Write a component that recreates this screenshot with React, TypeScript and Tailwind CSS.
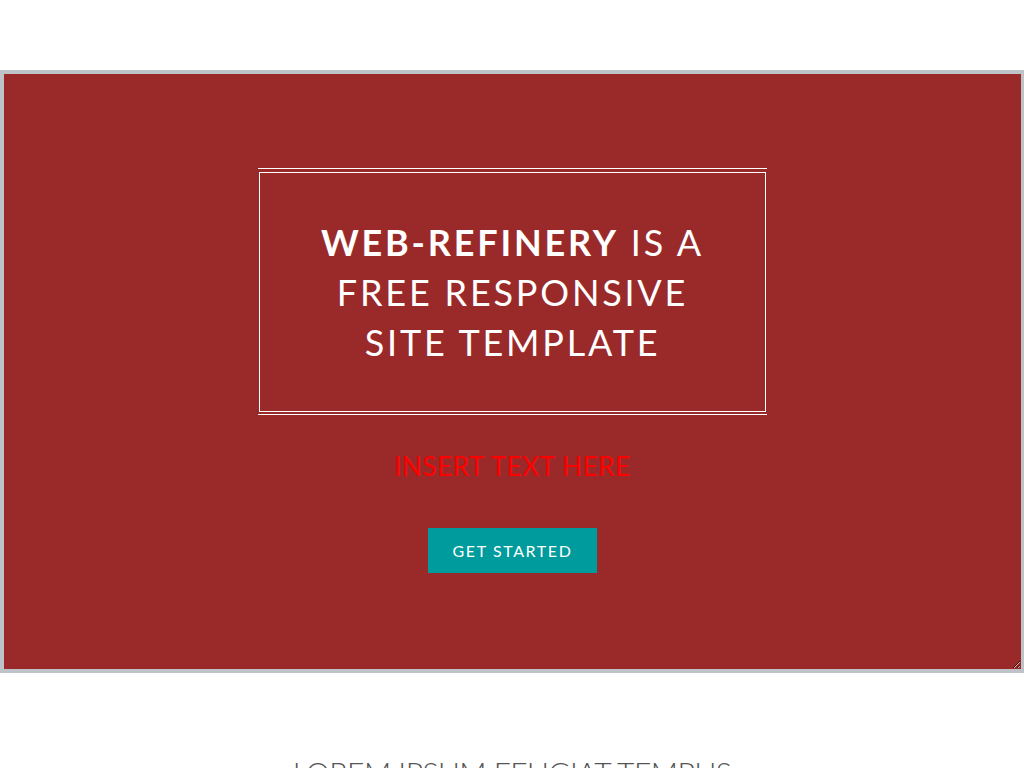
import React from 'react';

const font = { fontFamily: 'Lato, "Open Sans", sans-serif' };

const App: React.FC = () => {
  return (
    <div className="w-full min-h-screen bg-white overflow-hidden" style={font}>
      {/* top spacer where the header would sit */}
      <div className="h-[70px]" />

      <section className="resize overflow-auto border-4 border-r-[3px] border-[#bdc3c7] bg-[#9a2a2a] flex flex-col items-center pt-[94px] pb-[96px]">
        <div className="w-[509px] border-y border-white pt-[3px] pb-[2px] px-px">
          <div className="border border-white py-[44px] text-center">
            <h2 className="text-[36px] leading-[50px] text-white font-normal tracking-[2.8px]">
              <strong className="font-bold">WEB-REFINERY</strong> IS A
              <br />
              FREE RESPONSIVE
              <br />
              SITE TEMPLATE
            </h2>
          </div>
        </div>

        <p className="mt-[36px] text-[26px] leading-[30px] text-[#ff0000] font-normal tracking-[0.6px]">
          INSERT TEXT HERE
        </p>

        <button className="mt-[47px] w-[169px] h-[45px] bg-[#009b9c] text-white text-[16px] font-normal tracking-[1.6px]">
          GET STARTED
        </button>
      </section>

      <h2 className="mt-[81px] text-center text-[30px] leading-[36px] text-[#555] font-light tracking-[-0.5px]">
        LOREM IPSUM FEUGIAT TEMPUS
      </h2>
    </div>
  );
};

export default App;
